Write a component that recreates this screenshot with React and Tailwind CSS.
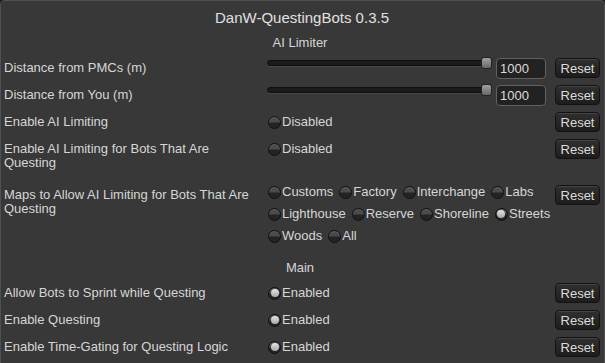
const font = { fontFamily: '"Liberation Sans", Arial, sans-serif' }

function Toggle({ on, label }) {
  return (
    <div className="flex items-center">
      <div className="ml-px w-[13px] h-[13px] rounded-full border border-[#101010] bg-linear-to-b from-[#4b4b4b] from-45% to-[#242424] to-55% flex items-center justify-center shadow-[inset_0_1px_0_rgba(255,255,255,0.1)]">
        {on && <div className="w-[8px] h-[8px] rounded-full bg-linear-to-b from-[#e4e4e4] to-[#a8a8a8]" />}
      </div>
      <span className="ml-px leading-[14px]">{label}</span>
    </div>
  )
}

function ResetButton() {
  return (
    <button className="w-[45px] h-[20px] shrink-0 rounded-[4px] border border-[#121212] bg-linear-to-b from-[#303030] to-[#1d1d1d] text-[13px] leading-none text-[#dcdcdc] shadow-[inset_0_1px_0_rgba(255,255,255,0.1)]">
      Reset
    </button>
  )
}

function Row({ label, children, className = '', multi }) {
  return (
    <div className={`flex items-start ${className}`}>
      <div className={`w-[263px] shrink-0 ${multi ? 'pt-[3px] leading-[14px]' : 'leading-[20px]'}`}>{label}</div>
      <div className="flex-1 min-w-0">{children}</div>
      <div className="ml-[9px]">
        <ResetButton />
      </div>
    </div>
  )
}

function Slider() {
  return (
    <div className="flex h-[20px] items-start">
      <div className="relative flex-1 h-[20px]">
        <div className="absolute left-0 right-[2px] top-[2px] h-[6px] rounded-full bg-[#1b1b1b] border border-[#0f0f0f] shadow-[0_1px_0_rgba(255,255,255,0.08)]" />
        <div className="absolute right-0 top-[-1px] w-[11px] h-[12px] rounded-[3px] border border-[#222] bg-linear-to-b from-[#a2a2a2] to-[#676767]" />
      </div>
      <div className="ml-[4px] w-[50px] h-[21px] rounded-[4px] border border-[#616161] bg-[#222222] px-[3px] text-[13px] leading-[19px] text-[#dcdcdc]">
        1000
      </div>
    </div>
  )
}

const mapRows = [
  [['Customs', false], ['Factory', false], ['Interchange', false], ['Labs', false]],
  [['Lighthouse', false], ['Reserve', false], ['Shoreline', false], ['Streets', true]],
  [['Woods', false], ['All', false]],
]

export default function App() {
  return (
    <div className="w-[605px] h-[363px] bg-[#1f1f1f] overflow-hidden">
      <div
        className="w-full h-full bg-[#383838] border border-b-0 border-[#505050] rounded-t-[5px] pl-[3px] pr-[4px] text-[13px] text-[#d6d6d6]"
        style={font}
      >
        <div className="pt-[7px] text-center text-[15px] leading-[20px] text-[#e0e0e0]">DanW-QuestingBots 0.3.5</div>
        <div className="mt-[6px] text-center leading-[18px] pr-[4px]">AI Limiter</div>

        <Row label="Distance from PMCs (m)" className="mt-[6px]">
          <Slider />
        </Row>
        <Row label="Distance from You (m)" className="mt-[7px]">
          <Slider />
        </Row>
        <Row label="Enable AI Limiting" className="mt-[7px]">
          <div className="h-[20px] flex items-center">
            <Toggle label="Disabled" />
          </div>
        </Row>
        <Row
          label={<>Enable AI Limiting for Bots That Are<br />Questing</>}
          multi
          className="mt-[7px]"
        >
          <div className="h-[20px] flex items-center">
            <Toggle label="Disabled" />
          </div>
        </Row>
        <Row
          label={<>Maps to Allow AI Limiting for Bots That Are<br />Questing</>}
          multi
          className="mt-[15px]"
        >
          <div className="flex flex-col gap-[8px]">
            {mapRows.map((r, i) => (
              <div key={i} className="flex gap-[5px] whitespace-nowrap">
                {r.map(([name, on]) => (
                  <Toggle key={name} label={name} on={on} />
                ))}
              </div>
            ))}
          </div>
        </Row>

        <div className="mt-[16px] text-center leading-[18px] pr-[4px]">Main</div>

        <Row label="Allow Bots to Sprint while Questing" className="mt-[6px]">
          <div className="h-[20px] flex items-center">
            <Toggle label="Enabled" on />
          </div>
        </Row>
        <Row label="Enable Questing" className="mt-[7px]">
          <div className="h-[20px] flex items-center">
            <Toggle label="Enabled" on />
          </div>
        </Row>
        <Row label="Enable Time-Gating for Questing Logic" className="mt-[7px]">
          <div className="h-[20px] flex items-center">
            <Toggle label="Enabled" on />
          </div>
        </Row>
      </div>
    </div>
  )
}
